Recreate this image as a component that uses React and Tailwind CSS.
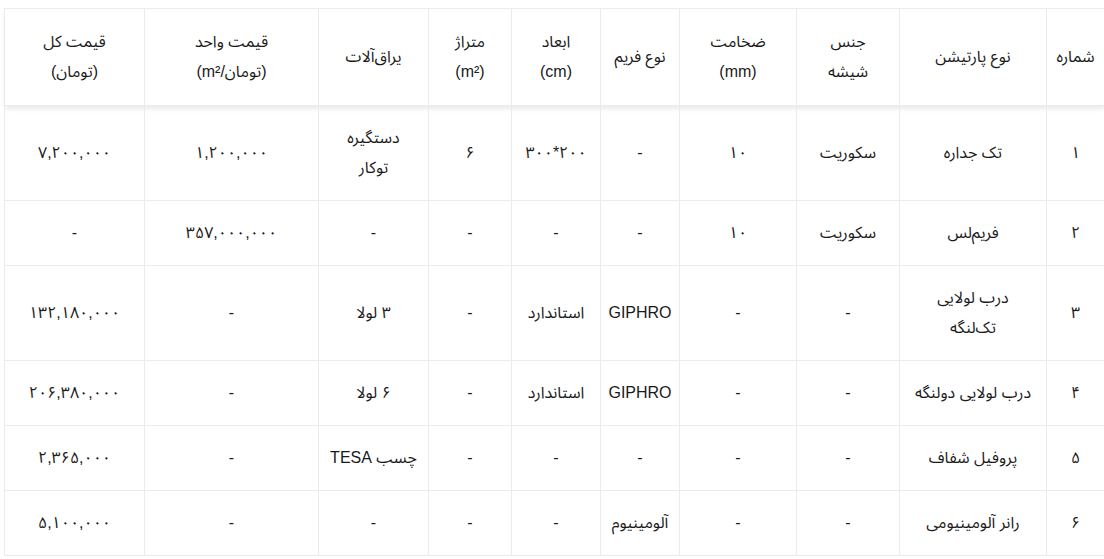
const COLS = [58, 147, 103, 117, 79, 89, 83, 110, 174, 140];

const HEAD = [
  ["شماره"],
  ["نوع پارتیشن"],
  ["جنس", "شیشه"],
  ["ضخامت", "(mm)"],
  ["نوع فریم"],
  ["ابعاد", "(cm)"],
  ["متراژ", "(m²)"],
  ["یراق‌آلات"],
  ["قیمت واحد", "(تومان/m²)"],
  ["قیمت کل", "(تومان)"],
];

const ROWS = [
  ["۱", "تک جداره", "سکوریت", "۱۰", "-", "۲۰۰*۳۰۰", "۶", ["دستگیره", "توکار"], "۱,۲۰۰,۰۰۰", "۷,۲۰۰,۰۰۰"],
  ["۲", "فریم‌لس", "سکوریت", "۱۰", "-", "-", "-", "-", "۳۵۷,۰۰۰,۰۰۰", "-"],
  ["۳", ["درب لولایی", "تک‌لنگه"], "-", "-", "GIPHRO", "استاندارد", "-", "۳ لولا", "-", "۱۳۲,۱۸۰,۰۰۰"],
  ["۴", "درب لولایی دولنگه", "-", "-", "GIPHRO", "استاندارد", "-", "۶ لولا", "-", "۲۰۶,۳۸۰,۰۰۰"],
  ["۵", "پروفیل شفاف", "-", "-", "-", "-", "-", "چسب TESA", "-", "۲,۳۶۵,۰۰۰"],
  ["۶", "رانر آلومینیومی", "-", "-", "آلومینیوم", "-", "-", "-", "-", "۵,۱۰۰,۰۰۰"],
];

function Lines({ value }) {
  const parts = Array.isArray(value) ? value : [value];
  return parts.map((p, i) => (
    <span key={i} className="block">{p}</span>
  ));
}

export default function App() {
  return (
    <div className="bg-white min-h-[559px] pt-2 pl-1 overflow-hidden">
      <table
        dir="rtl"
        className="table-fixed border-collapse w-[1100px] text-[16px] leading-[30px] text-[#1a1a1a] font-['Liberation_Sans','Noto_Sans_Arabic','DejaVu_Sans',sans-serif]"
      >
        <colgroup>
          {COLS.map((w, i) => (
            <col key={i} style={{ width: w }} />
          ))}
        </colgroup>
        <thead className="shadow-[0_3px_5px_rgba(0,0,0,0.09)]">
          <tr>
            {HEAD.map((h, i) => (
              <th key={i} className="border border-[#ebebeb] px-1.5 py-[18px] font-normal text-center align-middle">
                <Lines value={h} />
              </th>
            ))}
          </tr>
        </thead>
        <tbody>
          {ROWS.map((row, r) => (
            <tr key={r}>
              {row.map((c, i) => (
                <td key={i} className="border border-[#ebebeb] px-1.5 py-[17px] text-center align-middle">
                  <Lines value={c} />
                </td>
              ))}
            </tr>
          ))}
        </tbody>
      </table>
    </div>
  );
}
